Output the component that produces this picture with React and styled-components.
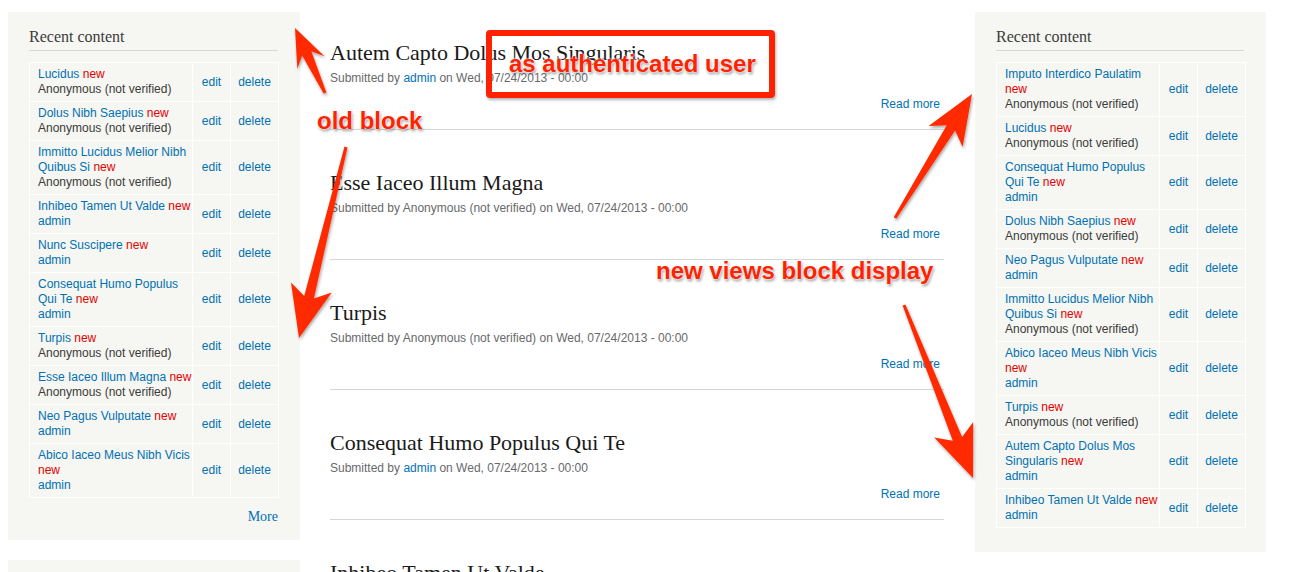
import React from "react";
import styled, { createGlobalStyle } from "styled-components";

const GlobalStyle = createGlobalStyle`
  html, body {
    margin: 0;
    padding: 0;
    background: #ffffff;
  }
  body {
    font-family: "Liberation Sans", Arial, sans-serif;
    color: #3b3b3b;
  }
`;

const leftRows = [
  { title: ["Lucidus"], author: "Anonymous (not verified)" },
  { title: ["Dolus Nibh Saepius"], author: "Anonymous (not verified)" },
  { title: ["Immitto Lucidus Melior Nibh", "Quibus Si"], author: "Anonymous (not verified)" },
  { title: ["Inhibeo Tamen Ut Valde"], author: "admin" },
  { title: ["Nunc Suscipere"], author: "admin" },
  { title: ["Consequat Humo Populus", "Qui Te"], author: "admin" },
  { title: ["Turpis"], author: "Anonymous (not verified)" },
  { title: ["Esse Iaceo Illum Magna"], author: "Anonymous (not verified)" },
  { title: ["Neo Pagus Vulputate"], author: "admin" },
  { title: ["Abico Iaceo Meus Nibh Vicis", ""], author: "admin" },
];

const rightRows = [
  { title: ["Imputo Interdico Paulatim", ""], author: "Anonymous (not verified)" },
  { title: ["Lucidus"], author: "Anonymous (not verified)" },
  { title: ["Consequat Humo Populus", "Qui Te"], author: "admin" },
  { title: ["Dolus Nibh Saepius"], author: "Anonymous (not verified)" },
  { title: ["Neo Pagus Vulputate"], author: "admin" },
  { title: ["Immitto Lucidus Melior Nibh", "Quibus Si"], author: "Anonymous (not verified)" },
  { title: ["Abico Iaceo Meus Nibh Vicis", ""], author: "admin" },
  { title: ["Turpis"], author: "Anonymous (not verified)" },
  { title: ["Autem Capto Dolus Mos", "Singularis"], author: "admin" },
  { title: ["Inhibeo Tamen Ut Valde"], author: "admin" },
];

const articles = [
  { title: "Autem Capto Dolus Mos Singularis", author: "admin" },
  { title: "Esse Iaceo Illum Magna", author: "Anonymous (not verified)" },
  { title: "Turpis", author: "Anonymous (not verified)" },
  { title: "Consequat Humo Populus Qui Te", author: "admin" },
  { title: "Inhibeo Tamen Ut Valde", author: "admin", cut: true },
];

// tail -> tip, head length, head width
const arrows = [
  { from: [325, 93], to: [295, 28], hl: 32, hw: 30 },
  { from: [346, 147], to: [299, 338], hl: 46, hw: 42 },
  { from: [895, 218], to: [972, 94], hl: 44, hw: 40 },
  { from: [904, 305], to: [973, 478], hl: 46, hw: 42 },
];

const arrowPoints = ({ from, to, hl, hw }) => {
  const dx = to[0] - from[0];
  const dy = to[1] - from[1];
  const len = Math.hypot(dx, dy);
  const ux = dx / len;
  const uy = dy / len;
  const nx = -uy;
  const ny = ux;
  const bx = to[0] - ux * hl;
  const by = to[1] - uy * hl;
  const tw = 1.5;
  const sw = 5;
  const back = 6;
  const pts = [
    [from[0] + nx * tw, from[1] + ny * tw],
    [bx + nx * sw + ux * 4, by + ny * sw + uy * 4],
    [bx + nx * hw / 2 - ux * back, by + ny * hw / 2 - uy * back],
    [to[0], to[1]],
    [bx - nx * hw / 2 - ux * back, by - ny * hw / 2 - uy * back],
    [bx - nx * sw + ux * 4, by - ny * sw + uy * 4],
    [from[0] - nx * tw, from[1] - ny * tw],
  ];
  return pts.map((p) => p.map((v) => v.toFixed(1)).join(",")).join(" ");
};

const RecentBlock = ({ rows, more, bottom }) => (
  <Block $bottom={bottom}>
    <BlockTitle>Recent content</BlockTitle>
    <Table>
      <colgroup>
        <col style={{ width: 163 }} />
        <col style={{ width: 38 }} />
        <col style={{ width: 48 }} />
      </colgroup>
      <tbody>
        {rows.map((row, i) => (
          <tr key={i}>
            <TitleCell>
              {row.title.map((line, j) => (
                <React.Fragment key={j}>
                  {j > 0 && <br />}
                  {line && <Link>{line}</Link>}
                  {j === row.title.length - 1 && (
                    <>
                      {line ? " " : ""}
                      <New>new</New>
                    </>
                  )}
                </React.Fragment>
              ))}
              <br />
              {row.author === "admin" ? <Link>admin</Link> : <span>{row.author}</span>}
            </TitleCell>
            <ActionCell>
              <Link>edit</Link>
            </ActionCell>
            <ActionCell>
              <Link>delete</Link>
            </ActionCell>
          </tr>
        ))}
      </tbody>
    </Table>
    {more && <MoreLink>More</MoreLink>}
  </Block>
);

const App = () => {
  return (
    <Page>
      <GlobalStyle />
      <LeftColumn>
        <RecentBlock rows={leftRows} more bottom={14} />
        <EmptyBlock />
      </LeftColumn>

      <Main>
        {articles.map((a, i) => (
          <Article key={i}>
            <ArticleTitle>{a.title}</ArticleTitle>
            {!a.cut && (
              <>
                <Submitted>
                  Submitted by{" "}
                  {a.author === "admin" ? <Link>admin</Link> : a.author} on Wed,
                  07/24/2013 - 00:00
                </Submitted>
                <ReadMore>
                  <Link>Read more</Link>
                </ReadMore>
              </>
            )}
          </Article>
        ))}
      </Main>

      <RightColumn>
        <RecentBlock rows={rightRows} bottom={24} />
      </RightColumn>

      <Overlay>
        <svg width="1295" height="572" viewBox="0 0 1295 572">
          <defs>
            <filter id="shadow" x="-20%" y="-20%" width="140%" height="140%">
              <feDropShadow dx="1" dy="2" stdDeviation="1.5" floodColor="#000" floodOpacity="0.35" />
            </filter>
          </defs>
          {arrows.map((a, i) => (
            <polygon key={i} points={arrowPoints(a)} fill="#ff2a00" filter="url(#shadow)" />
          ))}
        </svg>
        <Callout />
        <Label style={{ left: 317, top: 107 }}>old block</Label>
        <Label style={{ left: 509, top: 50 }}>as authenticated user</Label>
        <Label style={{ left: 656, top: 257 }}>new views block display</Label>
      </Overlay>
    </Page>
  );
};

const Page = styled.div`
  position: relative;
  display: flex;
  align-items: flex-start;
  width: 1295px;
  height: 572px;
  overflow: hidden;
  padding-left: 8px;
  box-sizing: border-box;
`;

const LeftColumn = styled.div`
  display: flex;
  flex-direction: column;
  gap: 20px;
  width: 292px;
  padding-top: 12px;
  flex-shrink: 0;
`;

const RightColumn = styled.div`
  width: 291px;
  padding-top: 12px;
  margin-left: 31px;
  flex-shrink: 0;
`;

const Block = styled.section`
  background: #f6f6f2;
  padding: 15px 22px ${(p) => p.$bottom}px 21px;
`;

const EmptyBlock = styled.section`
  background: #f6f6f2;
  height: 60px;
`;

const BlockTitle = styled.h2`
  margin: 0 0 11px;
  padding-bottom: 3px;
  border-bottom: 1px solid #d9d9d4;
  font-family: "Liberation Serif", Georgia, serif;
  font-weight: normal;
  font-size: 16px;
  line-height: 20px;
  color: #3b3b3b;
`;

const Table = styled.table`
  width: 249px;
  table-layout: fixed;
  border-collapse: collapse;
  font-family: "Liberation Sans", Arial, sans-serif;
  font-size: 12px;
  line-height: 15px;
  color: #3b3b3b;

  td {
    border: 1px solid #ffffff;
  }
`;

const TitleCell = styled.td`
  padding: 4px 8px;
  vertical-align: middle;
  white-space: nowrap;
`;

const ActionCell = styled.td`
  text-align: center;
  vertical-align: middle;
  padding: 4px 0;
`;

const Link = styled.a`
  color: #0071b3;
  text-decoration: none;
`;

const New = styled.span`
  color: #e30000;
`;

const MoreLink = styled.a`
  display: block;
  margin-top: 10px;
  text-align: right;
  font-family: "Liberation Serif", Georgia, serif;
  font-size: 14px;
  line-height: 18px;
  color: #0071b3;
`;

const Main = styled.main`
  width: 614px;
  margin-left: 30px;
  flex-shrink: 0;
`;

const Article = styled.article`
  padding-top: 40px;
  padding-bottom: 17px;
  border-bottom: 1px solid #d3d7d9;
`;

const ArticleTitle = styled.h2`
  margin: 0 0 5px;
  font-family: "Liberation Serif", Georgia, serif;
  font-weight: normal;
  font-size: 22px;
  line-height: 26px;
  color: #1a1a1a;
`;

const Submitted = styled.div`
  font-size: 12px;
  line-height: 15px;
  color: #68696b;
`;

const ReadMore = styled.div`
  margin-top: 11px;
  padding-right: 4px;
  text-align: right;
  font-size: 12px;
  line-height: 15px;
`;

const Overlay = styled.div`
  position: absolute;
  inset: 0;
  pointer-events: none;

  svg {
    position: absolute;
    left: 0;
    top: 0;
  }
`;

const Callout = styled.div`
  position: absolute;
  left: 486px;
  top: 30px;
  width: 289px;
  height: 68px;
  box-sizing: border-box;
  border: 6px solid #ff2200;
  border-radius: 4px;
  box-shadow: 1px 2px 3px rgba(0, 0, 0, 0.3);
`;

const Label = styled.span`
  position: absolute;
  white-space: nowrap;
  font-family: "Liberation Sans", Arial, sans-serif;
  font-weight: bold;
  font-size: 24px;
  line-height: 28px;
  color: #ff2200;
  text-shadow: 0 0 2px #fff, 0 0 2px #fff, 1px 2px 3px rgba(0, 0, 0, 0.45);
`;

export default App;
